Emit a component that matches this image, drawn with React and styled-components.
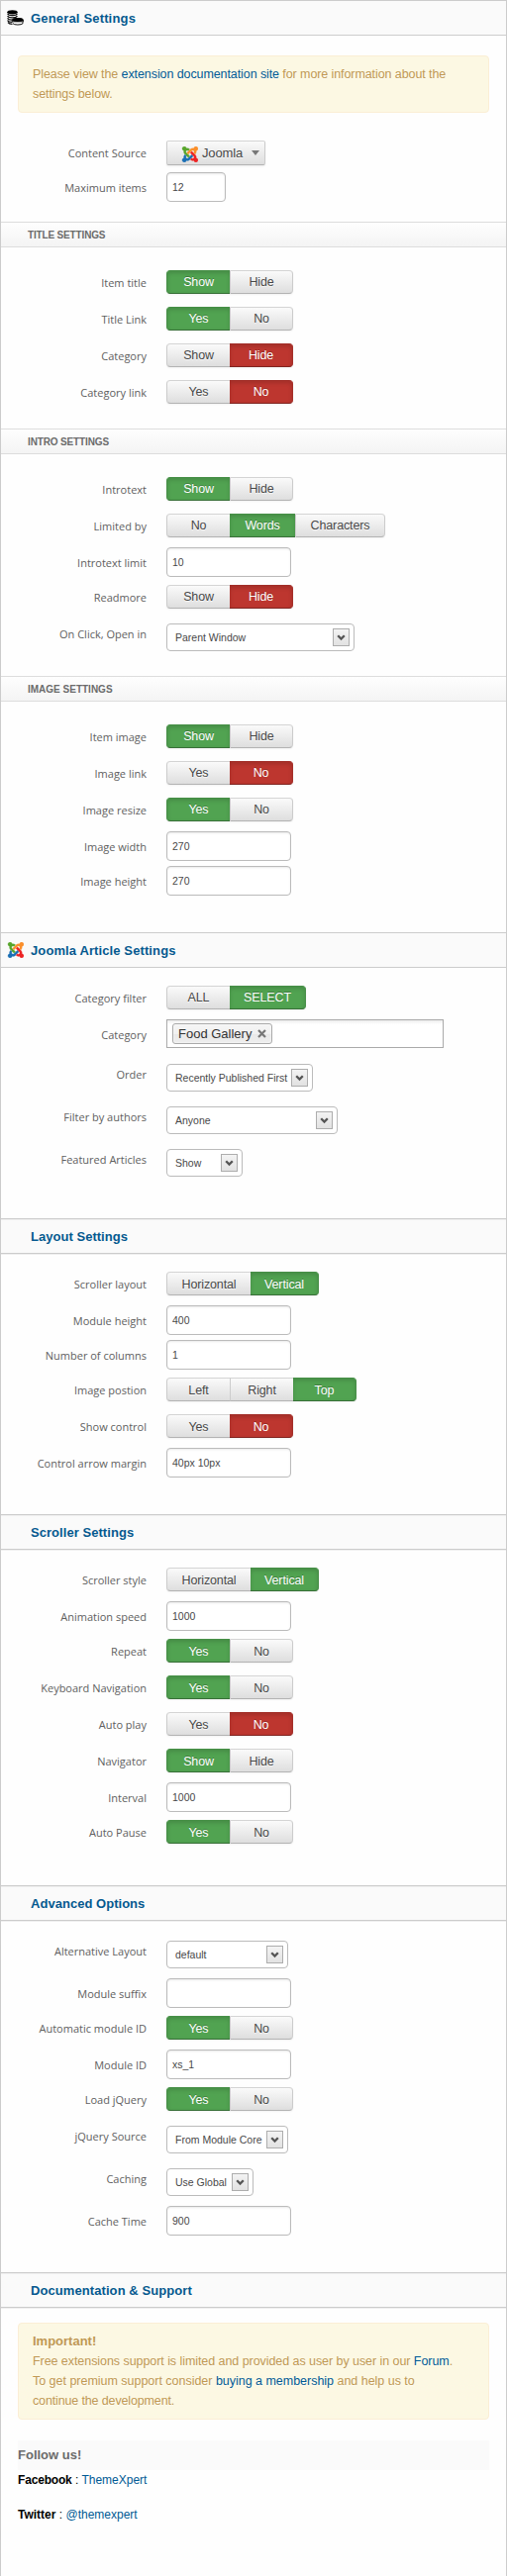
import React from "react";
import styled, { createGlobalStyle, css } from "styled-components";

const GlobalStyle = createGlobalStyle`
  *, *::before, *::after { box-sizing: border-box; }
  body { margin: 0; background: #fff; font-family: "Liberation Sans", Arial, sans-serif; font-size: 13px; }
  a { color: #005a94; text-decoration: none; }
`;

const Panel = styled.main`
  width: 512px;
  height: 2603px;
  border: solid #ccc;
  border-width: 0 1px;
  background: #fefefe;
  color: #000;
`;

const SectionHeader = styled.header`
  display: flex;
  align-items: center;
  height: 36px;
  padding: 0 0 0 6px;
  border: solid #ccc;
  border-width: 1px 0;
  background: #fafafa;
  box-shadow: ${(p) => (p.$soft ? "0 1px 0 #efefef, inset 0 1px 0 #efefef" : "none")};
`;

const HeaderIcon = styled.span`
  display: flex;
  width: 24px;
`;

const SectionTitle = styled.h3`
  margin: 0;
  padding-top: 1px;
  font-size: 13px;
  line-height: 34px;
  font-weight: bold;
  letter-spacing: ${(p) => p.$spacing || 0}px;
  color: #05598f;
`;

const SubHeader = styled.h4`
  margin: 0;
  height: 26px;
  padding-left: 27px;
  border: solid #ddd;
  border-width: 1px 0;
  background: linear-gradient(#fefefe, #f4f4f4);
  font-size: 10px;
  line-height: 25px;
  letter-spacing: ${(p) => p.$spacing || 0}px;
  text-transform: uppercase;
  color: #6b6b6b;
`;

const Fields = styled.div`
  --segment-line: ${(p) => (p.$low ? 25 : 23)}px;
  padding: ${(p) => p.$top}px 0 ${(p) => p.$bottom}px;
`;

const rowSizes = {
  toggle: css`height: 37px; padding-top: 3px;`,
  source: css`height: 35px; padding-top: 3px;`,
  input: css`height: 35px;`,
  tags: css`height: 40px;`,
  select: css`height: 43px; padding-top: 5px;`,
};

const Row = styled.div`
  display: flex;
  align-items: flex-start;
  ${(p) => rowSizes[p.$kind]}
`;

const labelShift = { toggle: 3, source: 3, input: 0, tags: 0, select: 5 };

const Label = styled.label`
  width: 147px;
  margin: ${(p) => -labelShift[p.$kind]}px 20px 0 0;
  font-family: "Open Sans", "Noto Sans", sans-serif;
  font-size: 11px;
  line-height: 32px;
  text-align: right;
  white-space: nowrap;
  color: #606060;
`;

const Group = styled.div`
  display: flex;
  border-radius: 4px;
  box-shadow: 0 1px 2px rgba(0, 0, 0, 0.05);
`;

const tones = {
  off: css`
    color: #484848;
    background: linear-gradient(#fafafa, #dedede);
    border-color: #d4d4d4 #ccc #b3b3b3;
    text-shadow: 0 1px 1px rgba(255, 255, 255, 0.75);
  `,
  green: css`
    color: #fff;
    background: #51a351;
    border-color: #468f46 #488f48 #387038;
    box-shadow: inset 0 2px 4px rgba(0, 0, 0, 0.15);
    text-shadow: 0 -1px 0 rgba(0, 0, 0, 0.25);
  `,
  red: css`
    color: #fff;
    background: #bd362f;
    border-color: #a12e28 #a52f29 #802420;
    box-shadow: inset 0 2px 4px rgba(0, 0, 0, 0.15);
    text-shadow: 0 -1px 0 rgba(0, 0, 0, 0.25);
  `,
};

const Segment = styled.button`
  display: block;
  width: ${(p) => p.$width}px;
  height: 24px;
  padding: 0;
  border: 1px solid;
  border-left-width: ${(p) => (p.$tone === "off" ? 1 : 0)}px;
  border-right-width: 0;
  font: 12.5px "Liberation Sans", Arial, sans-serif;
  line-height: var(--segment-line);
  letter-spacing: -0.13px;
  text-align: center;
  ${(p) => tones[p.$tone]}
  &:first-child { border-left-width: 1px; border-radius: 4px 0 0 4px; }
  &:last-child { border-right-width: 1px; border-radius: 0 4px 4px 0; }
`;

const SegmentText = styled.span`
  display: block;
  height: 22px;
`;

const SourceButton = styled.button`
  display: flex;
  align-items: center;
  width: 100px;
  height: 25px;
  padding: 2px 0 0 14px;
  border: 1px solid;
  border-radius: 2px;
  box-shadow: 0 1px 2px rgba(0, 0, 0, 0.08);
  font: 13px/20px "Liberation Sans", Arial, sans-serif;
  letter-spacing: -0.13px;
  ${tones.off}
`;

const SourceName = styled.span`
  width: 46px;
  margin: -2px 4px 0 4px;
  text-align: left;
`;

const Caret = styled.span`
  margin-top: -2px;
  border: solid transparent;
  border-width: 5px 4px 0;
  border-top-color: #777;
`;

const TextInput = styled.input`
  width: ${(p) => p.$width || 126}px;
  height: 30px;
  padding: 0 5px;
  border: 1px solid #bbb;
  border-radius: 4px;
  outline: 0;
  background: #fff;
  box-shadow: inset 0 1px 2px rgba(0, 0, 0, 0.09);
  font: 10.5px "Liberation Sans", Arial, sans-serif;
  color: #484848;
`;

const SelectBox = styled.div`
  display: flex;
  align-items: center;
  justify-content: space-between;
  width: ${(p) => p.$width}px;
  height: 28px;
  padding: 0 4px 0 8px;
  border: 1px solid #bbb;
  border-radius: 4px;
  background: #fff;
  font-size: 10.5px;
  white-space: nowrap;
  color: #484848;
`;

const SelectArrow = styled.span`
  display: flex;
  align-items: center;
  justify-content: center;
  width: 17px;
  height: 18px;
  border: 1px solid #adadad;
  background: linear-gradient(#f3f3f3, #e2e2e2);
`;

const TagField = styled.div`
  display: flex;
  width: 280px;
  height: 29px;
  padding: 3px 5px;
  border: 1px solid #aaa;
  background: linear-gradient(#eee 1%, #fff 15%);
`;

const Tag = styled.span`
  display: flex;
  align-items: center;
  justify-content: space-between;
  width: 101px;
  height: 21px;
  padding: 0 5px;
  border: 1px solid #aaa;
  border-radius: 3px;
  background: linear-gradient(#f4f4f4 20%, #f0f0f0 50%, #e8e8e8 52%, #eee);
  box-shadow: 0 0 2px #fff inset;
  font-size: 13px;
  line-height: 18px;
  color: #333;
`;

const Notice = styled.div`
  margin: ${(p) => p.$margin};
  padding: 8px 14px;
  border: 1px solid #fbeed5;
  border-radius: 4px;
  background: #fcf8e3;
  font-size: 12.5px;
  line-height: 20px;
  white-space: nowrap;
  color: #c09853;
  text-shadow: 0 1px 0 rgba(255, 255, 255, 0.5);
`;

const NoticeLine = styled.div`
  letter-spacing: ${(p) => p.$spacing || 0}px;
`;

const NoticeTitle = styled.strong`
  display: block;
  font-size: 13px;
`;

const FollowTitle = styled.h3`
  height: 30px;
  margin: 0 17px;
  background: #fafafa;
  font-size: 13px;
  line-height: 29px;
  color: #6b6b6b;
`;

const SocialLine = styled.p`
  margin: 0 17px 15px;
  font-size: 12px;
  line-height: 20px;

  b { letter-spacing: ${(p) => p.$spacing || 0}px; }
`;

const joomlaParts = [
  ["#57a52c", "M.6 92.1C.6 58.8 27.4 32 60.4 32c30 0 54.5 21.9 59.2 50.2 32.6-7.6 67.1.6 96.5 30l-44.3 44.3c-20.5-20.5-42.6-16.3-55.4-3.5-14.3 14.3-14.3 37.9 0 52.2l99.5 99.5-44 44.3c-87.7-87.2-49.7-49.7-99.8-99.7-26.8-26.5-35-64.8-24.8-98.9C20.4 144.6.6 120.7.6 92.1z"],
  ["#1a6fb5", "M312.1 307.6l-44-44.3c-87 86.4-50.4 50.4-99.7 99.8-14.3 14.3-37.6 14.3-51.9 0-13.1-13.4-16.9-35.3 3.2-55.4l-44-44.3c-30.2 30.2-38 65.2-29.5 98.3-26.7 6-46.2 29.9-46.2 58.2C0 453.2 26.8 480 59.8 480c28.6 0 52.5-19.8 58.6-46.7 32.7 8.2 68.5-.6 94.2-26 32.1-32 12.2-12.4 99.5-99.7z"],
  ["#ed2324", "M396.4 360.7c8.2-32.7-.9-68.5-26.3-93.9-11.8-12.2 5 4.7-99.5-99.7l-44.3 44.3 99.7 99.7c14.3 14.3 14.3 37.6 0 51.9-12.8 12.8-35 17-55.4-3.5l-44 44.3c27.6 30.2 68 38.8 102.7 28 5.5 27.4 29.7 48.1 58.9 48.1 33 0 59.8-26.8 59.8-60.1 0-30.2-22.5-55-51.6-59.1z"],
  ["#fb8f2a", "M130.1 208.5l44.3 44.3c10-10 89.7-89.7 99.7-99.8 14.3-14.3 37.6-14.3 51.9 0 12.8 12.8 17 35-3.5 55.4l44 44.3c31.2-31.2 38.5-67.6 28.9-101.2 29.2-4.1 51.9-29.2 51.9-59.5 0-33.2-26.8-60.1-59.8-60.1-30.3 0-55.4 22.5-59.5 51.6-33.8-9.9-71.7-1.5-98.3 25.1-18.3 19.1-71.1 71.5-99.6 99.9z"],
];

const JoomlaLogo = () => (
  <svg width="17" height="16" viewBox="-28 32 476 448">
    {joomlaParts.map(([fill, d]) => <path key={fill} fill={fill} stroke={fill} strokeWidth="8" d={d} />)}
  </svg>
);

const CoinsIcon = () => (
  <svg width="17" height="16" viewBox="0 0 17 16">
    <ellipse cx="5.5" cy="2.3" rx="5.2" ry="2.1" fill="#000" />
    <path d="M.6 3.8Q1.5 5.7 5.5 5.7T10.4 3.8M.6 6Q1.5 7.9 5.5 7.9T10.4 6M.6 8.2Q1.5 10.1 5.5 10.1M.6 10.4Q1.5 12.3 5.5 12.3M1 12.6Q2 14.3 5.5 14.4" fill="none" stroke="#111" strokeWidth="1.2" />
    <path d="M5.2 10.3c0-1.4 2.4-2.3 5.6-2.3s5.6.9 5.6 2.3z" fill="#000" />
    <path d="M5.3 10.2h11.2v1.6H5.3zM6 13.7Q7 15 10.9 15T16 13.7V12.2" fill="none" stroke="#111" strokeWidth="1" />
    <ellipse cx="10.9" cy="10" rx="5.5" ry="1.9" fill="#000" />
  </svg>
);

const Chevron = () => (
  <svg width="9" height="8" viewBox="0 0 9 8">
    <path d="M1.2 2.2L4.5 5.6L7.8 2.2" fill="none" stroke="#555" strokeWidth="2.3" />
  </svg>
);

const CloseMark = () => (
  <svg width="9" height="9" viewBox="0 0 9 9">
    <path d="M1 1L8 8M8 1L1 8" stroke="#777" strokeWidth="2.2" />
  </svg>
);

const Toggle = ({ label, options, active, tone = "green", widths = [64, 64, 64] }) => (
  <Row $kind="toggle">
    <Label $kind="toggle">{label}</Label>
    <Group>
      {options.map((text, i) => (
        <Segment key={text} $width={widths[i]} $tone={i === active ? tone : "off"}>
          <SegmentText>{text}</SegmentText>
        </Segment>
      ))}
    </Group>
  </Row>
);

const YesNo = ({ label, on, words = ["Yes", "No"] }) => (
  <Toggle label={label} options={words} active={on ? 0 : 1} tone={on ? "green" : "red"} />
);

const ShowHide = (props) => <YesNo {...props} words={["Show", "Hide"]} />;

const Field = ({ label, value, width }) => (
  <Row $kind="input">
    <Label $kind="input">{label}</Label>
    <TextInput $width={width} defaultValue={value} />
  </Row>
);

const Select = ({ label, value, width }) => (
  <Row $kind="select">
    <Label $kind="select">{label}</Label>
    <SelectBox $width={width}>
      {value}
      <SelectArrow><Chevron /></SelectArrow>
    </SelectBox>
  </Row>
);

const Header = ({ icon, spacing, soft, children }) => (
  <SectionHeader $soft={soft}>
    <HeaderIcon>{icon}</HeaderIcon>
    <SectionTitle $spacing={spacing}>{children}</SectionTitle>
  </SectionHeader>
);

export default function App() {
  return (
    <>
      <GlobalStyle />
      <Panel>
        <Header icon={<CoinsIcon />} spacing={0.17}>General Settings</Header>
        <Notice $margin="20px 17px 25px">
          <NoticeLine $spacing={-0.09}>Please view the <a href="#docs">extension documentation site</a> for more information about the</NoticeLine>
          <NoticeLine $spacing={-0.09}>settings below.</NoticeLine>
        </Notice>
        <Fields $top={0} $bottom={15}>
          <Row $kind="source">
            <Label $kind="source">Content Source</Label>
            <SourceButton>
              <JoomlaLogo />
              <SourceName>Joomla</SourceName>
              <Caret />
            </SourceButton>
          </Row>
          <Field label="Maximum items" value="12" width={60} />
        </Fields>

        <SubHeader $spacing={-0.16}>Title Settings</SubHeader>
        <Fields $top={20} $bottom={15}>
          <ShowHide label="Item title" on />
          <YesNo label="Title Link" on />
          <ShowHide label="Category" />
          <YesNo label="Category link" />
        </Fields>

        <SubHeader $spacing={-0.14}>Intro Settings</SubHeader>
        <Fields $top={20} $bottom={15}>
          <ShowHide label="Introtext" on />
          <Toggle label="Limited by" options={["No", "Words", "Characters"]} active={1} widths={[64, 66, 91]} />
          <Field label="Introtext limit" value="10" />
          <ShowHide label="Readmore" />
          <Select label="On Click, Open in" value="Parent Window" width={190} />
        </Fields>

        <SubHeader>Image Settings</SubHeader>
        <Fields $top={20} $bottom={32}>
          <ShowHide label="Item image" on />
          <YesNo label="Image link" />
          <YesNo label="Image resize" on />
          <Field label="Image width" value="270" />
          <Field label="Image height" value="270" />
        </Fields>

        <Header icon={<JoomlaLogo />} spacing={0.11}>Joomla Article Settings</Header>
        <Fields $top={15} $bottom={32}>
          <Toggle label="Category filter" options={["ALL", "SELECT"]} active={1} widths={[64, 77]} />
          <Row $kind="tags">
            <Label $kind="tags">Category</Label>
            <TagField>
              <Tag>Food Gallery <CloseMark /></Tag>
            </TagField>
          </Row>
          <Select label="Order" value="Recently Published First" width={148} />
          <Select label="Filter by authors" value="Anyone" width={173} />
          <Select label="Featured Articles" value="Show" width={77} />
        </Fields>

        <Header soft spacing={0.03}>Layout Settings</Header>
        <Fields $top={15} $bottom={32} $low>
          <Toggle label="Scroller layout" options={["Horizontal", "Vertical"]} active={1} widths={[85, 69]} />
          <Field label="Module height" value="400" />
          <Field label="Number of columns" value="1" />
          <Toggle label="Image postion" options={["Left", "Right", "Top"]} active={2} />
          <YesNo label="Show control" />
          <Field label="Control arrow margin" value="40px 10px" />
        </Fields>

        <Header soft spacing={0.05}>Scroller Settings</Header>
        <Fields $top={15} $bottom={32} $low>
          <Toggle label="Scroller style" options={["Horizontal", "Vertical"]} active={1} widths={[85, 69]} />
          <Field label="Animation speed" value="1000" />
          <YesNo label="Repeat" on />
          <YesNo label="Keyboard Navigation" on />
          <YesNo label="Auto play" />
          <ShowHide label="Navigator" on />
          <Field label="Interval" value="1000" />
          <YesNo label="Auto Pause" on />
        </Fields>

        <Header soft spacing={0.03}>Advanced Options</Header>
        <Fields $top={15} $bottom={32} $low>
          <Select label="Alternative Layout" value="default" width={123} />
          <Field label="Module suffix" value="" />
          <YesNo label="Automatic module ID" on />
          <Field label="Module ID" value="xs_1" />
          <YesNo label="Load jQuery" on />
          <Select label="jQuery Source" value="From Module Core" width={123} />
          <Select label="Caching" value="Use Global" width={88} />
          <Field label="Cache Time" value="900" />
        </Fields>

        <Header soft spacing={0.08}>Documentation &amp; Support</Header>
        <Notice $margin="15px 17px 21px">
          <NoticeTitle>Important!</NoticeTitle>
          <NoticeLine $spacing={-0.06}>Free extensions support is limited and provided as user by user in our <a href="#forum">Forum</a>.</NoticeLine>
          <NoticeLine $spacing={-0.02}>To get premium support consider <a href="#membership">buying a membership</a> and help us to</NoticeLine>
          <NoticeLine $spacing={-0.14}>continue the development.</NoticeLine>
        </Notice>
        <FollowTitle>Follow us!</FollowTitle>
        <SocialLine $spacing={-0.18}><b>Facebook</b> : <a href="#facebook">ThemeXpert</a></SocialLine>
        <SocialLine><b>Twitter</b> : <a href="#twitter">@themexpert</a></SocialLine>
      </Panel>
    </>
  );
}
